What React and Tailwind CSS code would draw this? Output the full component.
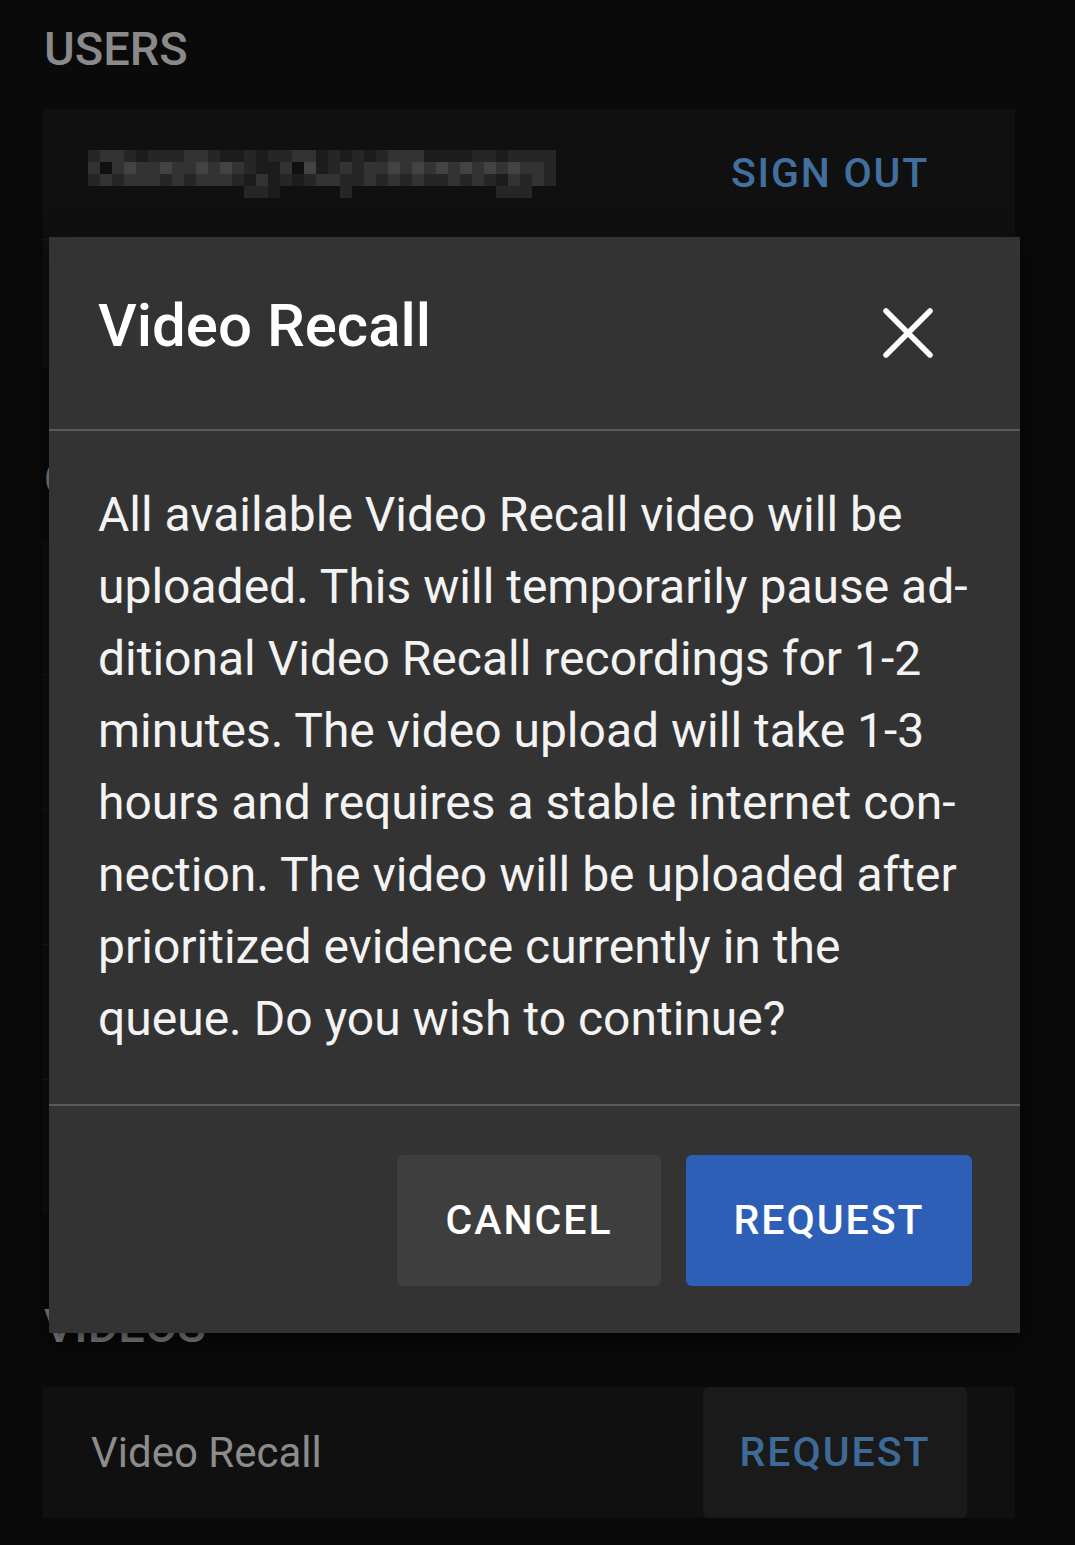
import React from 'react';

// pixelated (redacted) user name, one string per mosaic row
const mosaicRows = [
  '233212223321121223312121233311112212222',
  '303433433434321130412323343434343434332',
  '232333232333213121233223232322323213232',
  '000000000000022100000200000000000022200',
];

const shade = {
  '0': 'bg-[#101010]',
  '1': 'bg-[#1c1c1c]',
  '2': 'bg-[#262626]',
  '3': 'bg-[#333333]',
  '4': 'bg-[#434343]',
};

const bodyLines = [
  'All available Video Recall video will be',
  'uploaded. This will temporarily pause ad-',
  'ditional Video Recall recordings for 1-2',
  'minutes. The video upload will take 1-3',
  'hours and requires a stable internet con-',
  'nection. The video will be uploaded after',
  'prioritized evidence currently in the',
  'queue. Do you wish to continue?',
];

const RedactedName = () => (
  <div className="flex flex-col">
    {mosaicRows.map((row, r) => (
      <div key={r} className="flex">
        {row.split('').map((c, i) => (
          <span key={i} className={`block w-[12px] h-[12px] ${shade[c]}`} />
        ))}
      </div>
    ))}
  </div>
);

const SectionTitle = ({ children, className = '' }) => (
  <div className={`pl-px text-[47px] leading-[54px] font-medium text-[#8a8a8a] ${className}`}>
    {children}
  </div>
);

const CloseIcon = () => (
  <svg width="50" height="50" viewBox="0 0 50 50" fill="none">
    <path d="M3 3 L47 47 M47 3 L3 47" stroke="#ffffff" strokeWidth="5.5" strokeLinecap="round" />
  </svg>
);

const RecallDialog = () => (
  <div className="absolute left-[49px] top-[237px] w-[971px] bg-[#333333] shadow-[0_8px_24px_rgba(0,0,0,0.6)]">
    {/* header */}
    <div className="flex items-start justify-between h-[194px] pl-[49px] pr-[87px] pt-[55px] border-b-2 border-[#5a5a5a]">
      <h2 className="text-[60px] leading-[68px] font-medium text-white">Video Recall</h2>
      <div className="mt-[16px]">
        <CloseIcon />
      </div>
    </div>

    {/* body */}
    <div className="pl-[49px] pr-[40px] pt-[48px] pb-[49px] text-[48px] leading-[72px] text-[#f3f3f3]">
      {bodyLines.map(line => (
        <div key={line} className="whitespace-nowrap">{line}</div>
      ))}
    </div>

    {/* actions */}
    <div className="flex justify-end gap-[25px] pr-[48px] pt-[49px] pb-[47px] border-t-2 border-[#5a5a5a]">
      <button className="h-[131px] w-[264px] rounded-[6px] bg-[#3e3e3e] text-[41px] font-medium tracking-[2px] text-white">
        CANCEL
      </button>
      <button className="h-[131px] w-[286px] rounded-[6px] bg-[#2e5fb6] text-[41px] font-medium tracking-[2px] text-white">
        REQUEST
      </button>
    </div>
  </div>
);

export default function App() {
  return (
    <div className="relative min-h-[1545px] w-[1075px] overflow-hidden bg-[#0a0a0a] font-['Roboto',sans-serif]">
      <div className="pl-[43px] w-[1015px]">
        <SectionTitle className="pt-[22px] mb-[33px]">USERS</SectionTitle>
        <div className="bg-[#101010]">
          <div className="flex items-center justify-between h-[130px] pl-[45px] pr-[86px]">
            <RedactedName />
            <span className="text-[41px] font-medium tracking-[1.8px] text-[#41709f]">SIGN OUT</span>
          </div>
          <div className="h-[130px] border-t border-[#1a1a1a]" />
        </div>

        <SectionTitle className="mt-[83px] mb-[33px]">CAMERAS</SectionTitle>
        <div className="bg-[#0f0f0f]">
          {[0, 1, 2, 3, 4].map(i => (
            <div key={i} className={`h-[135px] ${i > 0 ? 'border-t border-[#1c1c1c]' : ''}`} />
          ))}
        </div>

        <SectionTitle className="mt-[85px] mb-[34px]">VIDEOS</SectionTitle>
        <div className="flex items-center justify-between h-[131px] bg-[#101010] pl-[48px] pr-[48px]">
          <span className="text-[42px] text-[#8c8c8c]">Video Recall</span>
          <button className="h-[131px] w-[264px] rounded-[6px] bg-[#1a1a1a] text-[41px] font-medium tracking-[2px] text-[#3e6a98]">
            REQUEST
          </button>
        </div>
      </div>

      <RecallDialog />
    </div>
  );
}
